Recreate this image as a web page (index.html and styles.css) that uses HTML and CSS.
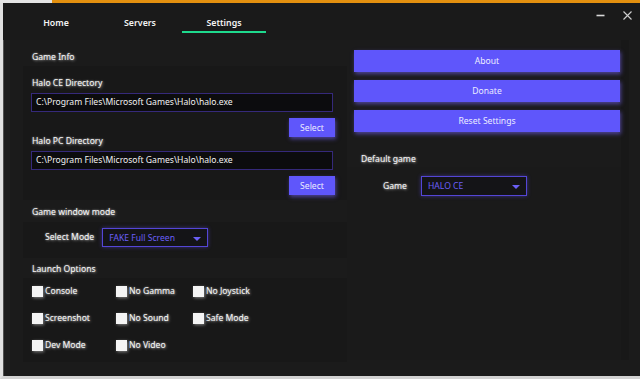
FILE: index.html
```html
<!DOCTYPE html>
<html lang="en">
<head>
  <meta charset="UTF-8">
  <title>Settings</title>
  <link rel="stylesheet" href="styles.css">
</head>
<body>
<div class="window">
  <div class="frame-top"></div>
  <div class="frame">
    <header class="titlebar">
      <nav class="tabs">
        <a class="tab">Home</a>
        <a class="tab">Servers</a>
        <a class="tab active">Settings</a>
      </nav>
      <div class="controls">
        <svg class="minimize" width="9" height="9" viewBox="0 0 9 9">
          <path d="M0.5 4.5 H8.5" stroke="#d8d8d8" stroke-width="1.6" fill="none"/>
        </svg>
        <svg class="close" width="9" height="9" viewBox="0 0 9 9">
          <path d="M0.5 0.5 L8.5 8.5 M8.5 0.5 L0.5 8.5" stroke="#cfcfcf" stroke-width="1.1" fill="none"/>
        </svg>
      </div>
    </header>

    <main class="content">
      <section class="col col-left">
        <div class="head head-first">Game Info</div>
        <div class="panel panel-info">
          <div class="label">Halo CE Directory</div>
          <div class="path">C:\Program Files\Microsoft Games\Halo\halo.exe</div>
          <div class="btn-row"><button class="btn btn-small">Select</button></div>
          <div class="label label-tight">Halo PC Directory</div>
          <div class="path">C:\Program Files\Microsoft Games\Halo\halo.exe</div>
          <div class="btn-row"><button class="btn btn-small">Select</button></div>
        </div>

        <div class="head head-mode">Game window mode</div>
        <div class="panel panel-mode">
          <span class="field-label">Select Mode</span>
          <div class="dropdown dropdown-mode">
            <span>FAKE Full Screen</span>
            <span class="arrow"></span>
          </div>
        </div>

        <div class="head head-launch">Launch Options</div>
        <div class="panel panel-launch">
          <label class="check"><span class="box"></span>Console</label>
          <label class="check"><span class="box"></span>No Gamma</label>
          <label class="check"><span class="box"></span>No Joystick</label>
          <label class="check"><span class="box"></span>Screenshot</label>
          <label class="check"><span class="box"></span>No Sound</label>
          <label class="check"><span class="box"></span>Safe Mode</label>
          <label class="check"><span class="box"></span>Dev Mode</label>
          <label class="check"><span class="box"></span>No Video</label>
        </div>
      </section>

      <section class="col col-right">
        <div class="actions">
          <button class="btn btn-wide">About</button>
          <button class="btn btn-wide">Donate</button>
          <button class="btn btn-wide">Reset Settings</button>
        </div>
        <div class="head head-default">Default game</div>
        <div class="panel panel-default">
          <span class="field-label">Game</span>
          <div class="dropdown dropdown-game">
            <span>HALO CE</span>
            <span class="arrow"></span>
          </div>
        </div>
      </section>
    </main>
  </div>
</div>
</body>
</html>
```

FILE: styles.css
```css
html, body {
  margin: 0;
  padding: 0;
}

body {
  background: #1b1b1b;
  font-family: "Noto Sans", "Open Sans", sans-serif;
  font-size: 8.6px;
  color: #ececec;
}

.window {
  width: 640px;
  height: 379px;
  overflow: hidden;
  display: flex;
  flex-direction: column;
  background: #1b1b1b;
}

.frame-top {
  height: 3px;
  flex: none;
  background: linear-gradient(to right, #e4e4e4 0, #e4e4e4 52px, #e3900f 52px);
}

.frame {
  flex: 1;
  display: flex;
  flex-direction: column;
  border-left: 3px solid #e0e0e0;
  border-bottom: 3px solid #d2d2d2;
  box-shadow: inset 1px 0 0 #505050;
}

/* title bar + tabs */
.titlebar {
  height: 37px;
  flex: none;
  display: flex;
  justify-content: space-between;
  background: #1a1a1a;
}

.tabs {
  display: flex;
  padding-left: 11px;
}

.tab {
  width: 84px;
  height: 30px;
  box-sizing: border-box;
  padding-top: 12px;
  line-height: 16px;
  text-align: center;
  font-weight: 600;
  font-size: 8.8px;
  color: #f4f4f4;
  border-bottom: 2px solid transparent;
}

.tab.active {
  border-bottom-color: #1ed98d;
}

.controls {
  width: 36px;
  flex: none;
  display: flex;
  justify-content: space-between;
  align-items: flex-start;
  margin-right: 8px;
  padding-top: 8px;
}

/* content */
.content {
  flex: 1;
  display: flex;
  padding-left: 20px;
}

.col-left {
  width: 324px;
}

.col-right {
  width: 274px;
  height: 320px;
  box-shadow: 8px 0 0 #181818;
}

.head,
.label,
.field-label,
.check {
  color: #f6f6f6;
  text-shadow: 0 0 2px rgba(255, 255, 255, 0.6), 1px 1px 3px rgba(255, 255, 255, 0.4);
}

.head {
  padding-left: 9px;
  line-height: 16px;
  box-sizing: border-box;
}

.head-first {
  height: 26px;
  padding-top: 9px;
}

.head-mode {
  height: 22px;
  padding-top: 4px;
}

.head-launch {
  height: 20px;
  padding-top: 3px;
}

.panel {
  background: #181818;
}

.panel-info {
  height: 134px;
  box-sizing: border-box;
  padding: 10px 12px 0 8px;
}

.label {
  padding-left: 1px;
  line-height: 14px;
  margin-bottom: 3px;
}

.label-tight {
  margin-top: -3px;
}

.path {
  height: 19px;
  box-sizing: border-box;
  margin-right: 2px;
  padding-left: 4px;
  line-height: 17px;
  background: #0c0c0e;
  border: 1px solid #35297a;
  color: #f2f2f2;
}

.btn-row {
  display: flex;
  justify-content: flex-end;
  margin-top: 6px;
}

.btn {
  font-family: inherit;
  font-size: 8.6px;
  border: 0;
  padding: 0;
  background: #5f56fb;
  color: #ececff;
  box-shadow: 1px 2px 4px rgba(120, 100, 255, 0.55);
}

.btn-small {
  width: 46px;
  height: 19px;
}

.panel-mode {
  height: 36px;
  box-sizing: border-box;
  padding: 6px 0 0 22px;
  display: flex;
  align-items: flex-start;
}

.field-label {
  line-height: 19px;
}

.dropdown {
  box-sizing: border-box;
  display: flex;
  justify-content: space-between;
  align-items: center;
  padding: 0 6px 0 6px;
  background: #141417;
  border: 1px solid #5446d6;
  color: #6a5ff6;
  box-shadow: 0 0 4px rgba(100, 80, 255, 0.45);
}

.dropdown-mode {
  width: 106px;
  height: 19px;
  margin-left: 8px;
}

.arrow {
  width: 0;
  height: 0;
  border-left: 4px solid transparent;
  border-right: 4px solid transparent;
  border-top: 4px solid #6a5ff6;
  margin-top: 2px;
}

.panel-launch {
  height: 84px;
  box-sizing: border-box;
  padding: 6px 0 0 9px;
  display: grid;
  grid-template-columns: 84px 77px 90px;
  grid-auto-rows: 14px;
  row-gap: 13px;
}

.check {
  display: flex;
  align-items: center;
  line-height: 14px;
}

.box {
  width: 11px;
  height: 11px;
  margin-right: 2px;
  background: #f4f4f4;
  box-shadow: 1px 1px 3px rgba(255, 255, 255, 0.45);
}

/* right column */
.actions {
  display: flex;
  flex-direction: column;
  gap: 8px;
  padding: 10px 0 0 7px;
  height: 102px;
  box-sizing: border-box;
}

.btn-wide {
  width: 266px;
  height: 22px;
}

.head-default {
  height: 25px;
  padding: 9px 0 0 14px;
}

.panel-default {
  height: 193px;
  box-sizing: border-box;
  padding: 9px 0 0 36px;
  display: flex;
  align-items: flex-start;
  background: #1a1a1a;
}

.panel-default .field-label {
  line-height: 20px;
}

.dropdown-game {
  width: 106px;
  height: 20px;
  margin-left: 14px;
}
```
